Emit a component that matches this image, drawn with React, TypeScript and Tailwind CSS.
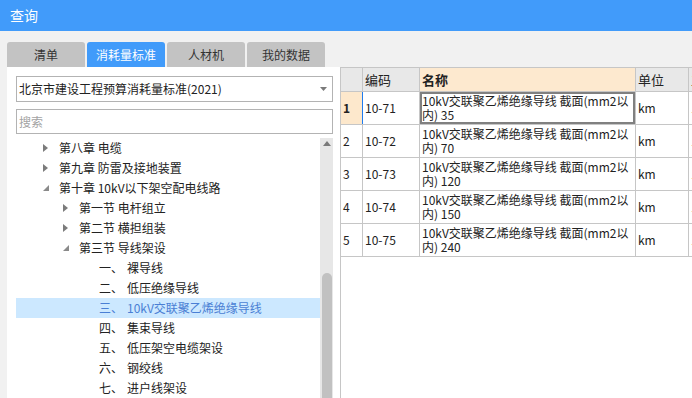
import React from "react";

type Node = { level: number; label: string; num?: string; state?: "open" | "closed"; selected?: boolean };

const tree: Node[] = [
  { level: 1, label: "第八章 电缆", state: "closed" },
  { level: 1, label: "第九章 防雷及接地装置", state: "closed" },
  { level: 1, label: "第十章 10kV以下架空配电线路", state: "open" },
  { level: 2, label: "第一节 电杆组立", state: "closed" },
  { level: 2, label: "第二节 横担组装", state: "closed" },
  { level: 2, label: "第三节 导线架设", state: "open" },
  { level: 3, num: "一、", label: "裸导线" },
  { level: 3, num: "二、", label: "低压绝缘导线" },
  { level: 3, num: "三、", label: "10kV交联聚乙烯绝缘导线", selected: true },
  { level: 3, num: "四、", label: "集束导线" },
  { level: 3, num: "五、", label: "低压架空电缆架设" },
  { level: 3, num: "六、", label: "钢绞线" },
  { level: 3, num: "七、", label: "进户线架设" },
];

const rows = [
  { code: "10-71", size: "35" },
  { code: "10-72", size: "70" },
  { code: "10-73", size: "120" },
  { code: "10-74", size: "150" },
  { code: "10-75", size: "240" },
];

const tabs = ["清单", "消耗量标准", "人材机", "我的数据"];

const Closed = () => (
  <svg width="5" height="8" viewBox="0 0 5 8">
    <path d="M0 0L5 4L0 8Z" fill="#7c7c7c" />
  </svg>
);

const Open = () => (
  <svg width="6" height="6" viewBox="0 0 6 6">
    <path d="M6 0L6 6L0 6Z" fill="#8a8a8a" />
  </svg>
);

const App = () => {
  return (
    <div className="w-[692px] h-[398px] overflow-hidden bg-[#f1f1f1] font-['Noto_Sans_CJK_SC',sans-serif] text-[#222]">
      <div className="h-[31px] bg-[#419bfa] flex items-center pl-[10px] text-[14px] text-white">查询</div>

      <div className="flex gap-[2px] pl-[7px] pt-[11px]">
        {tabs.map((t, i) => (
          <div
            key={t}
            className={
              i === 1
                ? "w-[78px] h-[25px] rounded-t-[3px] bg-[#419bfa] text-white text-[12px] flex items-center justify-center"
                : "w-[78px] h-[25px] rounded-t-[3px] bg-[#c3c3c3] text-[#333] text-[12px] flex items-center justify-center"
            }
          >
            {t}
          </div>
        ))}
      </div>

      <div className="flex h-[331px]">
        <div className="ml-[7px] w-[333px] bg-white flex flex-col">
          <div className="mt-[9px] ml-[9px] mr-[7px] h-[26px] border border-[#b3b3b3] flex items-center justify-between pl-[2px] pr-[5px] text-[12px]">
            <span>北京市建设工程预算消耗量标准(2021)</span>
            <svg width="7" height="4" viewBox="0 0 7 4">
              <path d="M0 0L7 0L3.5 4Z" fill="#7a7a7a" />
            </svg>
          </div>
          <div className="mt-[7px] ml-[9px] mr-[7px] h-[25px] border border-[#b3b3b3] flex items-center pl-[2px] text-[12px] text-[#a3a3a3]">
            搜索
          </div>

          <div className="mt-[4px] ml-[9px] mr-[7px] flex flex-1 overflow-hidden">
            <div className="w-[304px]">
              {tree.map((n) => (
                <div
                  key={n.label}
                  className={
                    "h-[20px] flex items-center text-[12px] " +
                    (n.selected ? "bg-[#cce8ff] text-[#4a7fd4]" : "")
                  }
                >
                  {n.level === 1 && (
                    <div className="pl-[27px] flex items-center">
                      <span className="w-[16px] flex items-center">{n.state === "open" ? <Open /> : <Closed />}</span>
                      <span>{n.label}</span>
                    </div>
                  )}
                  {n.level === 2 && (
                    <div className="pl-[47px] flex items-center">
                      <span className="w-[16px] flex items-center">{n.state === "open" ? <Open /> : <Closed />}</span>
                      <span>{n.label}</span>
                    </div>
                  )}
                  {n.level === 3 && (
                    <div className="pl-[83px] flex items-center">
                      <span className="w-[28px]">{n.num}</span>
                      <span>{n.label}</span>
                    </div>
                  )}
                </div>
              ))}
            </div>
            <div className="w-[13px] bg-[#e7e7e7] flex flex-col items-center">
              <svg className="mt-[3px]" width="8" height="5" viewBox="0 0 8 5">
                <path d="M0 5L4 0L8 5Z" fill="#7a7a7a" />
              </svg>
              <div className="mt-[127px] w-[10px] flex-1 rounded-t-[5px] bg-[#c1c1c1]" />
            </div>
          </div>
        </div>

        <div className="flex-1 bg-white border-l border-t border-[#c6c6c6] overflow-hidden">
          <div className="flex h-[24px] border-b border-[#c6c6c6] text-[13px] whitespace-nowrap">
            <div className="w-[22px] shrink-0 bg-[#e8e8e8] border-r border-[#c6c6c6]" />
            <div className="w-[57px] shrink-0 bg-[#e8e8e8] border-r border-[#c6c6c6] flex items-center pl-[2px]">编码</div>
            <div className="w-[216px] shrink-0 bg-[#fde9cf] border-r border-[#c6c6c6] flex items-center pl-[2px] font-bold">名称</div>
            <div className="w-[53px] shrink-0 bg-[#e8e8e8] border-r border-[#c6c6c6] flex items-center pl-[2px]">单位</div>
            <div className="w-[60px] shrink-0 bg-[#e8e8e8] flex items-center pl-[2px]">工程量</div>
          </div>
          {rows.map((r, i) => (
            <div key={r.code} className="flex h-[33px] border-b border-[#c6c6c6] text-[12px] whitespace-nowrap">
              <div
                className={
                  "w-[22px] shrink-0 border-r flex items-center pl-[2px] " +
                  (i === 0 ? "bg-[#fde8cc] border-[#1e7cf0] font-bold" : "border-[#c6c6c6]")
                }
              >
                {i + 1}
              </div>
              <div className="w-[57px] shrink-0 border-r border-[#c6c6c6] flex items-center pl-[2px]">{r.code}</div>
              <div
                className={
                  "w-[216px] shrink-0 border-r border-[#c6c6c6] flex items-center pl-[2px] leading-[14px] " +
                  (i === 0 ? "shadow-[inset_0_0_0_2px_#808080]" : "")
                }
              >
                <span>
                  10kV交联聚乙烯绝缘导线 截面(mm2以
                  <br />
                  内) {r.size}
                </span>
              </div>
              <div className="w-[53px] shrink-0 border-r border-[#c6c6c6] flex items-center pl-[2px]">km</div>
              <div className="w-[60px] shrink-0 flex items-center pl-[2px]">1</div>
            </div>
          ))}
        </div>
      </div>
    </div>
  );
};

export default App;
